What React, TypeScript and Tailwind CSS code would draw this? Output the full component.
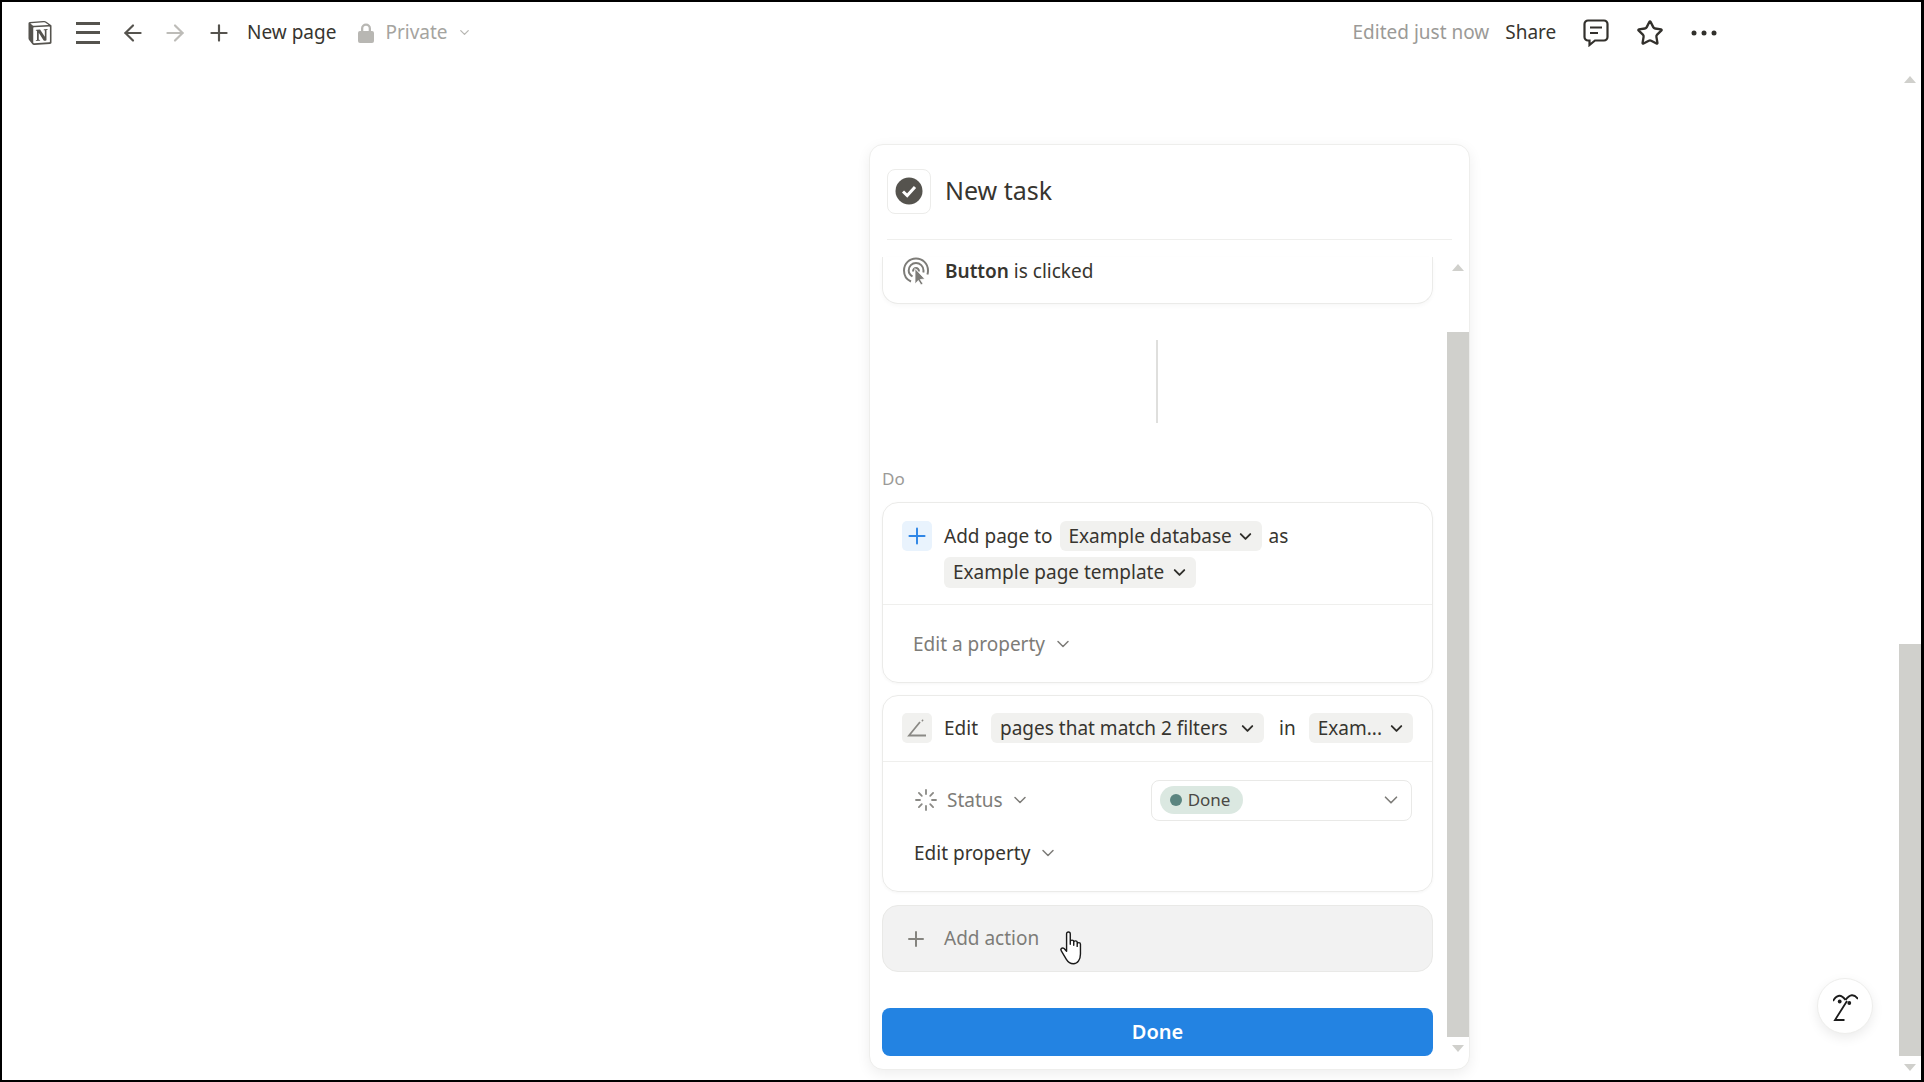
import { ArrowLeft, ArrowRight, ChevronDown, Loader, Plus, Star } from "lucide-react";
import { SiNotion } from "react-icons/si";

function Pill({ label, className }: { label: string; className: string }) {
  return (
    <div className={`flex items-center justify-between rounded-[6px] bg-[#f1f1ef] pl-[9px] pr-[7px] text-[#37352f] ${className}`}>
      <span>{label}</span>
      <ChevronDown className="h-[19px] w-[19px] text-[#2f2e2a]" strokeWidth={2.4} />
    </div>
  );
}

function ClickIcon() {
  return (
    <svg width="26" height="28" viewBox="0 0 26 28" fill="none" stroke="#7d7c78" strokeWidth="2">
      <path d="M8 24.5C3.5 22.5 1 18.5 1 13.5 1 6.5 6.5 1.5 13 1.5S25 6.5 25 13.5c0 1.5-.2 2.7-.6 4" />
      <path d="M9.5 19.5C7 18 5.7 16 5.7 13.5 5.7 9.2 9 6 13 6s7.5 3.2 7.5 7.5c0 .7 0 1.3-.2 2" />
      <path d="M16 14.5c0-2-1.4-3.5-3-3.5s-3 1.500-3 3.500" />
      <path d="M12 11.500v15.500l3.300-3.500 2.700 4.500 2-1.200-2.700-4.300 4.500-.5z" fill="#7d7c78" stroke="#fff" strokeWidth=".8" />
    </svg>
  );
}

function Hand() {
  return (
    <svg width="26" height="36" viewBox="0 0 24 33" fill="#fff" stroke="#1a1a1a" strokeWidth="1.300" strokeLinejoin="round">
      <path d="M7 3.500a1.700 1.700 0 0 1 3.400 0V13v-2.200a1.600 1.600 0 0 1 3.200 0V14v-2.500a1.600 1.600 0 0 1 3.200 0V15v-2a1.500 1.500 0 0 1 3 0v9c0 5-2.500 9-6.500 9-3.500 0-5-1.500-6.500-4L2 19c-1-1.500 1-3.500 2.700-2L7 19.500z" />
    </svg>
  );
}

function App() {
  return (
    <div className="flex h-[1082px] w-[1924px] border-t-2 border-r-[3px] border-b-2 border-l-2 border-black bg-white font-['Noto_Sans',sans-serif] text-[19px] text-[#37352f] overflow-hidden">
      <div className="relative flex min-w-0 flex-1 flex-col">
        {/* Top bar */}
        <div className="flex h-[64px] items-center pl-[26px] pb-[3px]">
          <SiNotion className="h-[24px] w-[24px] text-[#55534e]" />
          <svg className="ml-[24px]" width="24" height="22" viewBox="0 0 24 22" fill="#55534e">
            <rect y="0" width="24" height="3" />
            <rect y="9" width="24" height="3" />
            <rect y="19" width="24" height="3" />
          </svg>
          <ArrowLeft className="ml-[20px] h-[26px] w-[26px] text-[#55534e]" strokeWidth={2} />
          <ArrowRight className="ml-[16px] h-[26px] w-[26px] text-[#bdbcb8]" strokeWidth={2} />
          <Plus className="ml-[18px] h-[26px] w-[26px] text-[#55534e]" strokeWidth={2} />
          <span className="ml-[15px] text-[#37352f]">New page</span>
          <svg className="ml-[22px]" width="16" height="20" viewBox="0 0 16 20" fill="#b8b7b3">
            <path d="M3 8V5.500a5 5 0 0 1 10 0V8h1a2 2 0 0 1 2 2v8a2 2 0 0 1-2 2H2a2 2 0 0 1-2-2v-8a2 2 0 0 1 2-2zm2.300 0h5.400V5.500a2.700 2.700 0 0 0-5.400 0z" />
          </svg>
          <span className="ml-[11px] text-[#a5a4a0]">Private</span>
          <ChevronDown className="ml-[9px] h-[15px] w-[15px] text-[#b8b7b3]" strokeWidth={2} />
          <span className="ml-[881px] text-[#9b9a97]">Edited just now</span>
          <span className="ml-[16px] text-[#37352f]">Share</span>
          <svg className="ml-[27px]" width="26" height="28" viewBox="0 0 26 28" fill="none" stroke="#32302c" strokeWidth="2.200">
            <path d="M5 1.500h16A3.500 3.500 0 0 1 24.500 5v13a3.500 3.500 0 0 1-3.500 3.500H12L6.500 26v-4.500H5A3.500 3.500 0 0 1 1.500 18V5A3.500 3.500 0 0 1 5 1.500z" />
            <path d="M7 8.500h12M7 14h8" />
          </svg>
          <Star className="ml-[27px] h-[28px] w-[28px] text-[#32302c]" strokeWidth={2} />
          <svg className="ml-[27px]" width="26" height="6" viewBox="0 0 26 6" fill="#32302c">
            <circle cx="3" cy="3" r="2.500" />
            <circle cx="13" cy="3" r="2.500" />
            <circle cx="23" cy="3" r="2.500" />
          </svg>
        </div>

        {/* Button editor */}
        <div className="ml-[867px] mt-[78px] flex h-[926px] w-[601px] flex-col rounded-[14px] border border-[#eeeeec] bg-white shadow-[0_4px_14px_rgba(0,0,0,0.07)]">
          <div className="mx-[17px] flex h-[95px] shrink-0 items-center border-b border-[#efefed] pb-[2px]">
            <div className="flex h-[45px] w-[44px] items-center justify-center rounded-[8px] border border-[#ececea]">
              <svg width="28" height="28" viewBox="0 0 28 28">
                <circle cx="14" cy="14" r="13.500" fill="#55534e" />
                <path d="M8 14.500l4.200 4L20 10" fill="none" stroke="#fff" strokeWidth="3" />
              </svg>
            </div>
            <span className="ml-[14px] text-[25px] text-[#37352f]">New task</span>
          </div>

          <div className="flex min-h-0 flex-1 pl-[12px]">
            <div className="flex w-[551px] flex-col pt-[17px]">
              <div className="flex h-[47px] items-start rounded-b-[16px] border-x border-b border-[#ebebe9] pl-[20px] shadow-[0_2px_4px_rgba(0,0,0,0.03)]">
                <ClickIcon />
                <span className="ml-[16px] mt-[0px]">
                  <span className="font-semibold">Button</span> is clicked
                </span>
              </div>

              <div className="ml-[274px] mt-[36px] h-[83px] w-[2px] bg-[#dfdfdd]" />

              <div className="mt-[44px] text-[17px] leading-[24px] text-[#9b9a97]">Do</div>

              <div className="mt-[11px] h-[181px] rounded-[16px] border border-[#ebebe9] shadow-[0_1px_3px_rgba(0,0,0,0.04)]">
                <div className="flex h-[102px] items-start border-b border-[#efefed] pl-[19px] pt-[18px]">
                  <div className="flex h-[30px] w-[30px] shrink-0 items-center justify-center rounded-[5px] bg-[#e9f3fd]">
                    <Plus className="h-[26px] w-[26px] text-[#2f86e6]" strokeWidth={1.800} />
                  </div>
                  <div className="ml-[12px] flex flex-wrap items-center gap-x-[7px] gap-y-[6px]">
                    <span className="leading-[30px]">Add page to</span>
                    <Pill label="Example database" className="h-[30px] w-[202px]" />
                    <span className="leading-[30px]">as</span>
                    <Pill label="Example page template" className="h-[31px] w-[252px]" />
                  </div>
                </div>
                <div className="flex h-[78px] items-center pl-[30px] text-[#7d7c78]">
                  <span>Edit a property</span>
                  <ChevronDown className="ml-[8px] h-[20px] w-[20px] text-[#7d7c78]" strokeWidth={1.800} />
                </div>
              </div>

              <div className="mt-[12px] h-[197px] rounded-[16px] border border-[#ebebe9] shadow-[0_1px_3px_rgba(0,0,0,0.04)]">
                <div className="flex h-[66px] items-start border-b border-[#efefed] pl-[19px] pt-[17px]">
                  <div className="flex h-[30px] w-[30px] shrink-0 items-center justify-center rounded-[5px] bg-[#f1f1ef]">
                    <svg width="20" height="18" viewBox="0 0 20 18" fill="none" stroke="#8a8985" strokeWidth="1.800">
                      <path d="M13 3L2 16.500h17" />
                      <path d="M15 1l1 1" />
                    </svg>
                  </div>
                  <span className="ml-[12px] leading-[30px]">Edit</span>
                  <Pill label="pages that match 2 filters" className="ml-[13px] h-[30px] w-[273px]" />
                  <span className="ml-[15px] leading-[30px]">in</span>
                  <Pill label="Exam..." className="ml-[13px] h-[30px] w-[104px]" />
                </div>
                <div className="flex h-[76px] items-center pl-[31px]">
                  <Loader className="h-[24px] w-[24px] text-[#8a8985]" strokeWidth={1.800} />
                  <span className="ml-[9px] text-[#7d7c78]">Status</span>
                  <ChevronDown className="ml-[7px] h-[20px] w-[20px] text-[#7d7c78]" strokeWidth={1.800} />
                  <div className="ml-[121px] flex h-[41px] w-[261px] items-center justify-between rounded-[8px] border border-[#e9e9e7] pl-[8px] pr-[9px]">
                    <div className="flex h-[28px] items-center rounded-full bg-[#dbe8e1] pl-[10px] pr-[13px] text-[17px]">
                      <span className="h-[12px] w-[12px] rounded-full bg-[#5b8580]" />
                      <span className="ml-[6px] text-[#4a4945]">Done</span>
                    </div>
                    <ChevronDown className="h-[22px] w-[22px] text-[#7d7c78]" strokeWidth={1.800} />
                  </div>
                </div>
                <div className="flex items-center pl-[31px] pt-[1px]">
                  <span>Edit property</span>
                  <ChevronDown className="ml-[8px] h-[20px] w-[20px] text-[#7d7c78]" strokeWidth={1.800} />
                </div>
              </div>

              <div className="relative mt-[13px] flex h-[67px] items-center rounded-[16px] border border-[#e9e9e7] bg-[#f2f2f2] pl-[21px] text-[#7d7c78]">
                <Plus className="h-[24px] w-[24px] text-[#85847f]" strokeWidth={2} />
                <span className="ml-[16px]">Add action</span>
                <div className="absolute left-[176px] top-[24px]">
                  <Hand />
                </div>
              </div>

              <button className="mt-[36px] h-[48px] w-full rounded-[8px] bg-[#2383e2] text-[20px] font-semibold text-white">Done</button>
            </div>

            {/* Panel scrollbar */}
            <div className="ml-[14px] flex w-[22px] flex-col items-center pt-[24px]">
              <div className="h-0 w-0 border-x-[6px] border-b-[7px] border-x-transparent border-b-[#d0d0cc]" />
              <div className="mt-[61px] h-[705px] w-full bg-[#d0d0cc]" />
              <div className="mt-[8px] h-0 w-0 border-x-[6px] border-t-[7px] border-x-transparent border-t-[#d0d0cc]" />
            </div>
          </div>
        </div>

        {/* Help button */}
        <div className="absolute left-[1815px] top-[976px] flex h-[56px] w-[56px] items-center justify-center rounded-full border border-[#eeeeec] bg-white shadow-[0_4px_12px_rgba(0,0,0,0.08)]">
          <svg width="25" height="29" viewBox="0 0 25 29" fill="none" stroke="#1c1c1c" strokeWidth="1.800">
            <path d="M0 9Q6-1 12.500 8M12.500 8Q19-1 25 7" />
            <path d="M14 9L2 28h9.500" />
            <circle cx="6.700" cy="9.500" r="1.900" fill="#1c1c1c" stroke="none" />
            <circle cx="16.300" cy="11" r="1.900" fill="#1c1c1c" stroke="none" />
          </svg>
        </div>
      </div>

      {/* Page scrollbar */}
      <div className="flex w-[22px] shrink-0 flex-col items-center pt-[74px]">
        <div className="h-0 w-0 border-x-[6px] border-b-[7px] border-x-transparent border-b-[#d0d0cc]" />
        <div className="mt-[561px] h-[412px] w-full bg-[#d0d0cc]" />
        <div className="mt-[8px] h-0 w-0 border-x-[6px] border-t-[7px] border-x-transparent border-t-[#d0d0cc]" />
      </div>
    </div>
  );
}

export default App;
